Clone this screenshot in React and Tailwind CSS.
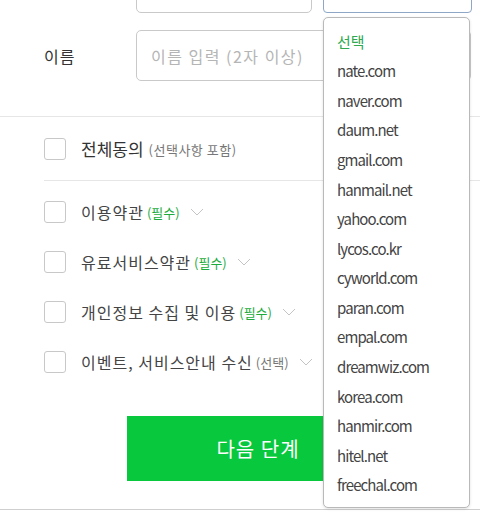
const domains = [
  'nate.com',
  'naver.com',
  'daum.net',
  'gmail.com',
  'hanmail.net',
  'yahoo.com',
  'lycos.co.kr',
  'cyworld.com',
  'paran.com',
  'empal.com',
  'dreamwiz.com',
  'korea.com',
  'hanmir.com',
  'hitel.net',
  'freechal.com',
]

const terms = [
  { label: '이용약관', tag: '(필수)', required: true },
  { label: '유료서비스약관', tag: '(필수)', required: true },
  { label: '개인정보 수집 및 이용', tag: '(필수)', required: true },
  { label: '이벤트, 서비스안내 수신', tag: '(선택)', required: false },
]

const font = { fontFamily: '"Noto Sans CJK KR", "Noto Sans", sans-serif' }

function Chevron() {
  return (
    <svg className="w-[14px] h-[8px] ml-[10px] text-[#c4c4c4]" viewBox="0 0 14 8" fill="none" stroke="currentColor">
      <path d="M1 1l6 6 6-6" strokeWidth={1} />
    </svg>
  )
}

function Checkbox() {
  return <div className="w-[22px] h-[22px] border border-[#c8c8c8] rounded-[3px] bg-white shrink-0"></div>
}

export default function App() {
  return (
    <div className="relative w-[480px] h-[512px] overflow-hidden bg-white text-[#333]" style={font}>
      {/* email row (mostly scrolled out of view) */}
      <div className="flex mt-[-38px] pl-[136px] gap-[11px]">
        <div className="w-[176px] h-[51px] border border-[#c9c9c9] rounded-[5px]"></div>
        <div className="w-[149px] h-[51px] border border-[#8ea7c6] rounded-[4px]"></div>
      </div>

      {/* name row */}
      <div className="flex items-center mt-[17px]">
        <div className="w-[136px] pl-[44px] text-[16px] tracking-[1px]">이름</div>
        <div className="w-[335px] h-[51px] border border-[#c9c9c9] rounded-[5px] flex items-center pl-[14px] text-[16px] tracking-[1.5px] text-[#b5b5b5]">
          이름 입력 (2자 이상)
        </div>
      </div>

      {/* agreements */}
      <div className="mt-[35px] border-t border-[#e6e6e6]">
        <div className="flex items-center h-[63px] pl-[44px] pt-[1px]">
          <Checkbox />
          <span className="ml-[15px] text-[17px] text-[#333]">전체동의</span>
          <span className="ml-[5px] text-[13px] tracking-[0.5px] text-[#777] mt-[2px]">(선택사항 포함)</span>
        </div>
        <div className="ml-[44px] border-t border-[#e6e6e6]"></div>
        <div className="pt-[6px]">
          {terms.map((t) => (
            <div key={t.label} className="flex items-center h-[50px] pl-[44px]">
              <Checkbox />
              <span className="ml-[15px] text-[16px] tracking-[1px] text-[#444]">{t.label}</span>
              <span className={`ml-[3px] text-[13px] mt-[2px] ${t.required ? 'text-[#1aab3b]' : 'text-[#777]'}`}>
                {t.tag}
              </span>
              <Chevron />
            </div>
          ))}
        </div>
      </div>

      {/* next button */}
      <div className="mt-[29px] ml-[127px] w-[262px] h-[65px] bg-[#08c83d] flex items-center justify-center text-white text-[20px] tracking-[1px]">
        다음 단계
      </div>

      <div className="mt-[28px] border-t border-[#cfcfcf]"></div>

      {/* open domain dropdown */}
      <div className="absolute left-[323px] top-[17px] w-[147px] h-[491px] bg-white border border-[#b9b9b9] rounded-[5px] shadow-[0_1px_3px_rgba(0,0,0,0.12)] pt-[9px] pl-[13px]">
        <div className="h-[29.6px] flex items-center text-[15px] text-[#2fa84f]">선택</div>
        {domains.map((d) => (
          <div key={d} className="h-[29.6px] flex items-center text-[15px] text-[#444] tracking-[-0.9px]">
            {d}
          </div>
        ))}
      </div>
    </div>
  )
}
